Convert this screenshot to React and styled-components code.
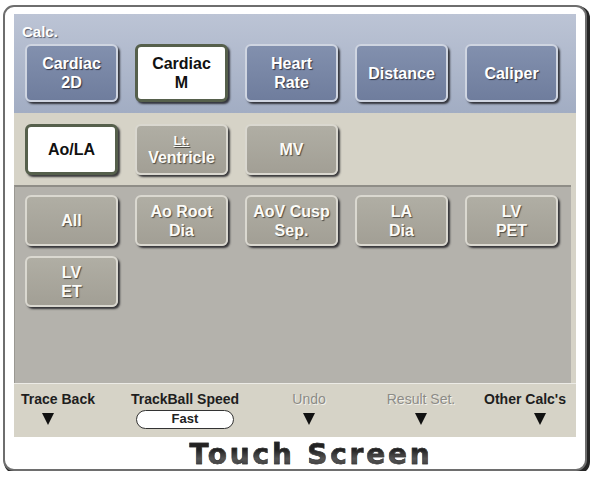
import React from "react";
import styled, { createGlobalStyle, css } from "styled-components";

const GlobalStyle = createGlobalStyle`
  body {
    margin: 0;
    background: #ffffff;
    font-family: "Liberation Sans", Arial, sans-serif;
  }
`;

const Frame = styled.div`
  box-sizing: border-box;
  width: 584px;
  height: 466px;
  margin: 5px 0 0 3px;
  padding: 7px 9px 0 9px;
  background: #ffffff;
  border: 2px solid #6e6e6e;
  border-radius: 11px;
  box-shadow: 2px 2px 0 1px #262626;
  display: flex;
  flex-direction: column;

  & > * {
    flex-shrink: 0;
  }
`;

const CalcSection = styled.div`
  height: 99px;
  box-sizing: border-box;
  padding: 9px 0 0 11px;
  background: linear-gradient(#bcc4d5, #a2adc3);
`;

const SectionLabel = styled.div`
  font-size: 15px;
  font-weight: bold;
  line-height: 17px;
  color: #ffffff;
  text-shadow: 1px 1px 1px #555b6a;
  margin: 0 0 4px -3px;
`;

const ButtonRow = styled.div`
  display: flex;
  gap: 17px;
`;

const ButtonGrid = styled.div`
  display: grid;
  grid-template-columns: repeat(5, 93px);
  column-gap: 17px;
  row-gap: 10px;
`;

const variants = {
  blue: css`
    background: linear-gradient(#8290ae, #6f7d9d);
    border-color: #cfd5e1;
    color: #ffffff;
    text-shadow: 1px 1px 1px #2f3445;
  `,
  gray: css`
    background: linear-gradient(#b0aea4, #a29f95);
    border-color: #dad8d0;
    color: #fbfbf8;
    text-shadow: 1px 1px 1px #4e4c45;
  `,
  active: css`
    background: #ffffff;
    border-color: #56604c;
    color: #111111;
  `,
};

const PadButton = styled.div`
  box-sizing: border-box;
  width: 93px;
  height: ${(p) => (p.$tall ? 58 : 51)}px;
  border: 2px solid;
  border-radius: 6px;
  box-shadow: 2px 2px 2px rgba(30, 30, 35, 0.85);
  display: flex;
  flex-direction: column;
  align-items: center;
  justify-content: center;
  font-size: 16px;
  font-weight: bold;
  line-height: 19px;
  text-align: center;
  white-space: nowrap;
  ${(p) => variants[p.$variant]}
  ${(p) =>
    p.$variant === "active" &&
    css`
      border-width: 3px;
    `}
`;

const Abbrev = styled.span`
  font-size: 13px;
  line-height: 15px;
  text-decoration: underline;
`;

const ModeSection = styled.div`
  height: 72px;
  box-sizing: border-box;
  padding: 11px 0 0 11px;
  background: #d6d3c7;
`;

const ItemSection = styled.div`
  height: 198px;
  box-sizing: border-box;
  margin-right: 5px;
  padding: 8px 0 0 10px;
  background: #b4b2ac;
  border-top: 2px solid #8f8d87;
  border-left: 1px solid #9a9892;
  box-shadow: 5px 0 0 #d6d3c7;
`;

const ControlBar = styled.div`
  height: 54px;
  box-sizing: border-box;
  padding-top: 7px;
  background: #d6d3c7;
  border-top: 1px solid #ecebe6;
  display: grid;
  grid-template-columns: 88px 166px 82px 142px 66px;
  justify-items: center;
`;

const Control = styled.div`
  display: flex;
  flex-direction: column;
  align-items: center;
  white-space: nowrap;
`;

const ControlLabel = styled.div`
  font-size: 14px;
  line-height: 17px;
  color: ${(p) => (p.$disabled ? "#8c8b86" : "#1e1e1e")};
  text-shadow: ${(p) => (p.$disabled ? "1px 1px 0 #f2f1ec" : "none")};
  font-weight: ${(p) => (p.$disabled ? "normal" : "bold")};
`;

const Arrow = styled.div`
  width: 0;
  height: 0;
  margin-top: 5px;
  margin-left: ${(p) => p.$shift || 0}px;
  border-left: 6px solid transparent;
  border-right: 6px solid transparent;
  border-top: 12px solid #111111;
`;

const SpeedPill = styled.div`
  box-sizing: border-box;
  width: 98px;
  height: 19px;
  margin-top: 2px;
  border: 1.5px solid #333333;
  border-radius: 10px;
  background: #ffffff;
  font-size: 13px;
  font-weight: bold;
  line-height: 16px;
  text-align: center;
  color: #222222;
`;

const Title = styled.div`
  flex: 1 1 0;
  min-height: 0;
  display: flex;
  align-items: center;
  justify-content: center;
  padding: 4px 0 0 32px;
  font-family: "DejaVu Sans", sans-serif;
  font-size: 28px;
  line-height: 28px;
  font-weight: bold;
  letter-spacing: 2.8px;
  -webkit-text-stroke: 0.5px #333333;
  color: transparent;
  background: linear-gradient(#222222 40%, #555555 68%, #333333);
  background-clip: text;
  -webkit-background-clip: text;
`;

const calcTabs = [
  { lines: ["Cardiac", "2D"], variant: "blue" },
  { lines: ["Cardiac", "M"], variant: "active" },
  { lines: ["Heart", "Rate"], variant: "blue" },
  { lines: ["Distance"], variant: "blue" },
  { lines: ["Caliper"], variant: "blue" },
];

const items = [
  ["All"],
  ["Ao Root", "Dia"],
  ["AoV Cusp", "Sep."],
  ["LA", "Dia"],
  ["LV", "PET"],
  ["LV", "ET"],
];

const controls = [
  { label: "Trace Back", shift: -20 },
  { label: "TrackBall Speed", pill: "Fast" },
  { label: "Undo", disabled: true },
  { label: "Result Set.", disabled: true },
  { label: "Other Calc's", shift: 30 },
];

const App = () => {
  return (
    <>
      <GlobalStyle />
      <Frame>
        <CalcSection>
          <SectionLabel>Calc.</SectionLabel>
          <ButtonRow>
            {calcTabs.map((t) => (
              <PadButton key={t.lines.join()} $variant={t.variant} $tall>
                {t.lines.map((l) => (
                  <span key={l}>{l}</span>
                ))}
              </PadButton>
            ))}
          </ButtonRow>
        </CalcSection>

        <ModeSection>
          <ButtonRow>
            <PadButton $variant="active">Ao/LA</PadButton>
            <PadButton $variant="gray">
              <Abbrev>Lt.</Abbrev>
              <span>Ventricle</span>
            </PadButton>
            <PadButton $variant="gray">MV</PadButton>
          </ButtonRow>
        </ModeSection>

        <ItemSection>
          <ButtonGrid>
            {items.map((lines, i) => (
              <PadButton key={i} $variant="gray">
                {lines.map((l) => (
                  <span key={l}>{l}</span>
                ))}
              </PadButton>
            ))}
          </ButtonGrid>
        </ItemSection>

        <ControlBar>
          {controls.map((c) => (
            <Control key={c.label}>
              <ControlLabel $disabled={c.disabled}>{c.label}</ControlLabel>
              {c.pill ? <SpeedPill>{c.pill}</SpeedPill> : <Arrow $shift={c.shift} />}
            </Control>
          ))}
        </ControlBar>

        <Title>Touch Screen</Title>
      </Frame>
    </>
  );
};

export default App;
